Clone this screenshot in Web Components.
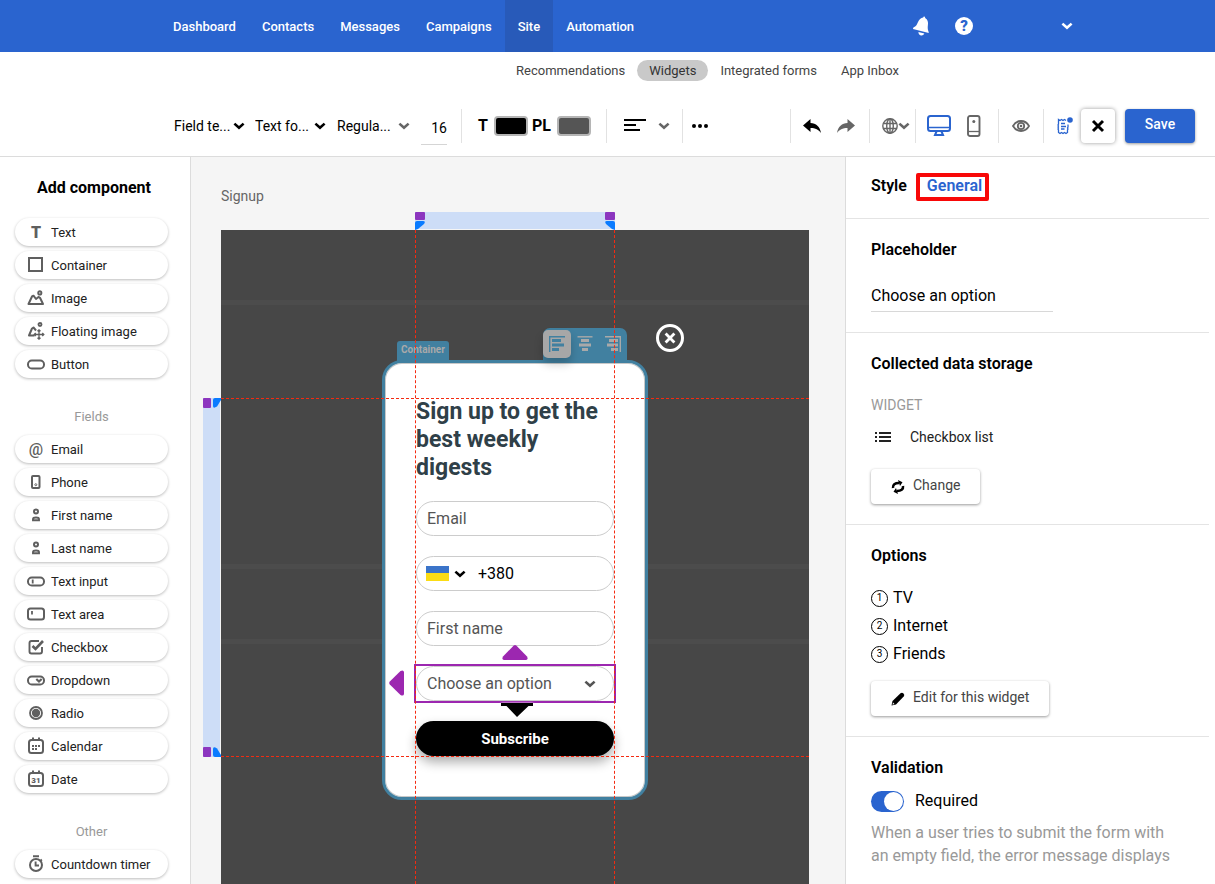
<!DOCTYPE html>
<html lang="en">
<head>
<meta charset="utf-8">
<title>Widget editor – Signup</title>
<style>
  html, body { margin: 0; height: 100%; }
  body { font-family: Roboto, "Liberation Sans", sans-serif; color: #000; background: #fff; overflow: hidden; }
</style>
</head>
<body>
<widget-editor></widget-editor>

<script>
const BASE = `
  *, *::before, *::after { box-sizing: border-box; }
  button, input, select { font: inherit; color: inherit; margin: 0; padding: 0; border: 0; background: none; }
  button { cursor: pointer; }
  a { color: inherit; text-decoration: none; }
  h2, h3, p, ul, ol { margin: 0; padding: 0; font-weight: inherit; list-style: none; }
`;

function define(name, html, setup) {
  const template = document.createElement('template');
  template.innerHTML = html;
  customElements.define(name, class extends HTMLElement {
    connectedCallback() {
      if (this.shadowRoot) return;
      const root = this.attachShadow({ mode: 'open' });
      root.append(template.content.cloneNode(true));
      const style = document.createElement('style');
      style.textContent = BASE;
      root.prepend(style);
      if (setup) setup(this, root);
    }
  });
}

/* name: [width, height, markup] */
const S = 'fill="none" stroke="currentColor"';
const ICONS = {
  chevron: [12, 8, `<path d="M1.400 1.600 6 5.800 10.600 1.600" ${S} stroke-width="2.600"/>`],
  bell: [20, 22, `<path fill="currentColor" d="M13.2 1.4c.9.2 1 .8.9 1.5 2.600 1.500 3.300 4 2.800 7.200-.3 2.200-.3 4.400.6 6.500l.3 1.500L2 13.900c.1-.9.400-1.300 1.300-1.800 1.800-1 2.700-2.700 3.600-4.900C8 4.500 9.800 2.900 12.200 2.500c.1-.8.400-1.200 1-1.100z"/><path fill="currentColor" d="M7.400 17l6 1.600c-.8 1.600-2.100 2.200-3.500 1.900-1.500-.4-2.500-1.700-2.500-3.500z"/>`],
  lines: [22, 14, `<path d="M0 1h22M0 6h12M0 11h16" ${S} stroke-width="2"/>`],
  dots: [16, 4, `<circle cx="2" cy="2" r="2"/><circle cx="8" cy="2" r="2"/><circle cx="14" cy="2" r="2"/>`],
  undo: [18, 16, `<path fill="currentColor" d="M0 7.500 7.500 1v4C13 5.200 17 8.500 18 15c-2.500-3.500-5.500-5-10.500-5v4z"/>`],
  redo: [18, 16, `<path fill="currentColor" d="M18 7.500 10.500 1v4C5 5.200 1 8.500 0 15c2.500-3.500 5.500-5 10.500-5v4z"/>`],
  globe: [16, 16, `<g ${S} stroke-width="1.400"><circle cx="8" cy="8" r="7.200"/><ellipse cx="8" cy="8" rx="3.300" ry="7.200"/><path d="M8 .8v14.400M1.200 5.500h13.600M1.200 10.500h13.600"/></g>`],
  monitor: [24, 22, `<g ${S} stroke-width="2"><rect x="1" y="1" width="22" height="15" rx="2.500"/><path d="M1 12.500h22" stroke-width="1.500"/><path d="M9.500 16.500 8 20h8l-1.500-3.500" /></g>`],
  mobile: [14, 22, `<g ${S} stroke-width="1.900"><rect x="1" y="1" width="11.500" height="20" rx="2"/><path d="M1 16.500h12" stroke-width="1.300"/></g><circle cx="6.800" cy="6.500" r="1.500" fill="currentColor"/>`],
  eye: [18, 12, `<path d="M1 6C3 2.500 5.800 1 9 1s6 1.500 8 5c-2 3.500-4.800 5-8 5S3 9.500 1 6z" ${S} stroke-width="1.800"/><circle cx="9" cy="6" r="3.200" ${S} stroke-width="1.800"/><circle cx="9" cy="6" r="1.300" fill="currentColor"/>`],
  notes: [16, 18, `<g ${S} stroke-width="1.300"><path d="M9 3.500 7.500 2.500 6 3.500 4.500 2.500 3 3.500 1.500 2.500V7L1 8l.5 1-.5 1 .5 1-.5 1 .5 1v2.500l1.500 1 1.500-1 1.500 1 1.500-1 1.500 1 1.500-1V13l.5-1-.5-1 .5-1V7.500"/><path d="M4 6.500h4M4 9.500h5M4 12h3.500"/></g><circle cx="13" cy="3" r="2.800" fill="currentColor"/>`],
  close: [12, 12, `<path d="M1 1l10 10M11 1 1 11" ${S} stroke-width="2.900"/>`],
  closeSmall: [10, 10, `<path d="M.6.600l8.800 8.800M9.400.600.600 9.400" ${S} stroke-width="2.800"/>`],
  box: [16, 16, `<rect x="1" y="1" width="13" height="13" ${S} stroke-width="2"/>`],
  image: [18, 16, `<path d="M1.500 14 5 6.500l1.500-.8L9 9l2.500-2 1.500.8 3 6.200z" ${S} stroke-width="2" stroke-linejoin="round"/><circle cx="12.800" cy="2.900" r="1.600" ${S} stroke-width="1.900"/>`],
  floating: [18, 18, `<path d="M7.500 13.500H2L5 6.500l1.500-1L9 8.500" ${S} stroke-width="2" stroke-linejoin="round"/><circle cx="13" cy="2.500" r="1.500" ${S} stroke-width="1.900"/><path d="M12 8v9M7.500 12.500h9M10.500 9.300 12 7.800l1.500 1.500M10.500 15.700 12 17.200l1.500-1.500M8.700 11l-1.500 1.500L8.700 14M15.300 11l1.500 1.500-1.500 1.500" ${S} stroke-width="1.300"/>`],
  pill: [18, 11, `<rect x="1" y="1.500" width="16" height="8" rx="3.800" ${S} stroke-width="2"/>`],
  phone: [10, 14, `<rect x="1" y="1" width="7.500" height="12" rx="1" ${S} stroke-width="2"/><circle cx="4.800" cy="9.700" r="1" ${S} stroke-width=".9"/>`],
  person: [8, 14, `<circle cx="4" cy="3.400" r="2" ${S} stroke-width="2"/><path d="M1 12.200v-1.200c0-2 6-2 6 0v1.200z" ${S} stroke-width="1.900"/>`],
  input: [18, 11, `<rect x="1" y="1.500" width="16" height="8" rx="3.800" ${S} stroke-width="2"/><path d="M5.700 3.500v4" ${S} stroke-width="1.800"/>`],
  area: [18, 14, `<rect x="1" y="1.500" width="16" height="11" rx="2.500" ${S} stroke-width="2"/><path d="M5 4v3.500" ${S} stroke-width="1.800"/>`],
  check: [16, 16, `<path d="M11 2H3.500Q1.500 2 1.500 4v8.500q0 2 2 2H12q2 0 2-2V8" ${S} stroke-width="1.900"/><path d="M4.500 7 7.500 10 15 2" ${S} stroke-width="2.600"/>`],
  dropdown: [18, 11, `<rect x="1" y="1.500" width="16" height="8" rx="3.800" ${S} stroke-width="2"/><path d="M9.300 4 12 6.500 14.700 4" ${S} stroke-width="2.200"/>`],
  radio: [14, 14, `<circle cx="7" cy="7" r="6" ${S} stroke-width="1.800"/><circle cx="7" cy="7" r="4.200" fill="currentColor"/>`],
  calendar: [16, 18, `<rect x="1" y="3" width="14" height="13" rx="2.500" ${S} stroke-width="2"/><path d="M5 .5V4M11 .5V4" ${S} stroke-width="2"/><path d="M4 8h2v2H4zM7 8h2v2H7zM10 8h2v2h-2zM4 11h2v2H4zM7 11h2v2H7z" fill="currentColor"/>`],
  date: [16, 18, `<rect x="1" y="3" width="14" height="13" rx="2.500" ${S} stroke-width="2"/><path d="M5 .5V4M11 .5V4" ${S} stroke-width="2"/><text x="8" y="13" text-anchor="middle" font-size="8" font-weight="900" fill="currentColor">31</text>`],
  timer: [16, 18, `<circle cx="8" cy="10" r="6" ${S} stroke-width="2"/><path d="M5 1.300h6M7.600 6.500v4h3.400M12.500 4.500l1.300 1.300" ${S} stroke-width="1.900"/>`],
  list: [16, 10, `<path d="M0 1h2M0 5h2M0 9h2M4 1h12M4 5h12M4 9h12" ${S} stroke-width="2"/>`],
  sync: [14, 14, `<path d="M2 8C1.500 4.500 4 3 8 3M12 6c.5 3.500-2 5-6 5" ${S} stroke-width="2.600"/><path fill="currentColor" d="M7 0 11.500 2.200 9 6zM7 14 2.500 11.800 5 8z"/>`],
  pencil: [14, 14, `<path fill="currentColor" d="M.5 13.500 1.500 9 9.500 1.200q1.500-1.200 3 .2t.2 3L5 12.500z"/><path d="M2 10.500 3.500 12l-2 .8z" fill="#fff"/>`],
  alignLeft: [16, 16, `<path d="M.7 0v16M.7.8H16" ${S} stroke-width="1.400"/><path fill="currentColor" d="M3 3h9v3H3zM3 7.500h12v3H3zM3 12h7v3H3z"/>`],
  alignCenter: [16, 16, `<path d="M.5.8h15" ${S} stroke-width="1.400"/><path fill="currentColor" d="M4 3h8v3H4zM2 7.500h12v3H2zM5 12h6v3H5z"/>`],
  alignRight: [16, 16, `<path d="M15.300 0v16M0 .8h16" ${S} stroke-width="1.400"/><path fill="currentColor" d="M4 3h9v3H4zM2 7.500h11v3H2zM6 12h7v3H6z"/>`],
  arrowUp: [26, 16, `<path fill="currentColor" d="M11.500.8Q13-.6 14.500.8L25 11.500q1.500 3-1 3.500H2q-2.500-.5-1-3.500z"/>`],
  arrowLeft: [16, 26, `<path fill="currentColor" d="M.8 11.500Q-.6 13 .8 14.500L11.500 25q3 1.500 3.500-1V2q-.5-2.500-3.500-1z"/>`],
  drop: [34, 16, `<path fill="currentColor" d="M1 1h32v3h-4.500L17 15 6.500 4H1z"/>`],
  handle: [10, 9, `<path fill="currentColor" d="M0 2q0-2 2-2h6q3 0 1 3L3 8 0 9z"/>`],
  handleSide: [8, 10, `<path fill="currentColor" d="M2 0h6v2L4 8.500Q0 11 0 8V2q0-2 2-2z"/>`]
};

define('ui-icon', `
  <style>:host { display: inline-flex; flex: none; } svg { display: block; overflow: visible; }</style>`,
  (host, root) => {
    const [w, h, body] = ICONS[host.getAttribute('name')];
    const holder = document.createElement('template');
    holder.innerHTML = `<svg width="${w}" height="${h}" viewBox="0 0 ${w} ${h}" aria-hidden="true">${body}</svg>`;
    root.append(holder.content);
  });

/* Drop-down with its chevron laid at the end of the box. */
define('ui-select', `
  <style>
    :host { display: inline-grid; align-items: center; color: #000; --chevron: currentColor; }
    select { appearance: none; grid-area: 1 / 1; width: 100%; height: 100%; outline: 0; border-radius: 0; opacity: 1; }
    ui-icon { grid-area: 1 / 1; justify-self: end; pointer-events: none; color: var(--chevron); z-index: 1; }
  </style>
  <select></select><ui-icon name="chevron"></ui-icon>`,
  (host, root) => {
    const select = root.querySelector('select');
    select.setAttribute('aria-label', host.getAttribute('label'));
    select.add(new Option(host.getAttribute('value')));
  });

define('top-nav', `
  <style>
    :host { display: flex; height: 52px; padding: 0 142px 0 162px; background: #2a64cf; color: #fff; flex: none; justify-content: space-between; }
    nav { display: flex; font-size: 13px; font-weight: 500; padding-bottom: 0; }
    nav a { display: flex; align-items: center; padding: 0 13px; }
    nav a:first-child { padding-left: 11px; }
    nav a[aria-current] { background: #285ab9; }
    .tools { display: flex; align-items: center; }
    .tools button { display: flex; }
    .tools .help { width: 18px; height: 18px; margin: 0 88px 0 24px; border-radius: 50%; background: #fff; color: #2a64cf; font-size: 15px; font-weight: 900; justify-content: center; align-items: center; }
  </style>
  <nav>
    <a href="#">Dashboard</a><a href="#">Contacts</a><a href="#">Messages</a><a href="#">Campaigns</a><a href="#" aria-current="page">Site</a><a href="#">Automation</a>
  </nav>
  <div class="tools">
    <button aria-label="Notifications"><ui-icon name="bell"></ui-icon></button>
    <button class="help" aria-label="Help">?</button>
    <button aria-label="Account"><ui-icon name="chevron"></ui-icon></button>
  </div>`);

define('sub-nav', `
  <style>
    :host { display: flex; justify-content: flex-end; padding: 8px 304px 8px 0; font-size: 13px; color: #444; flex: none; }
    a { padding: 0 12px; line-height: 21px; border-radius: 11px; }
    a[aria-current] { background: #c9c9c9; color: #333; }
  </style>
  <a href="#">Recommendations</a><a href="#" aria-current="page">Widgets</a><a href="#">Integrated forms</a><a href="#">App Inbox</a>`);

define('tool-bar', `
  <style>
    :host { display: flex; align-items: center; height: 68px; padding: 6px 20px 0 174px; border-bottom: 1px solid #dcdcdc; font-size: 14px; flex: none; }
    button { display: flex; align-items: center; justify-content: center; flex: none; }
    ui-select { width: 71px; height: 24px; margin-right: 10px; }
    ui-select[value^="Text"] { margin-right: 11px; }
    ui-select[value^="Regula"] { width: 73px; margin-right: 11px; --chevron: #666; }
    .size { width: 26px; height: 38px; padding-top: 6px; border-bottom: 1px solid #d5d5d5; text-align: right; outline: 0; }
    hr { width: 1px; height: 34px; margin: 0; border: 0; background: #e2e2e2; flex: none; }
    .size + hr { margin: 0 16px 0 14px; }
    .colour { display: flex; align-items: center; gap: 6px; font-size: 16px; font-weight: 700; margin-right: 4px; }
    .swatch { width: 34px; height: 20px; border: 2px solid #b5b5b5; border-radius: 4px; background: #000; }
    .swatch.grey { background: #555; }
    .colour + hr { margin-left: 11px; }
    .align { gap: 12px; margin: 0 12px 0 17px; }
    .align ui-icon + ui-icon { color: #666; }
    .more { margin-left: 9px; }
    .spacer { flex: 1; }
    .group { display: flex; align-items: center; justify-content: center; flex: none; color: #666; }
    .history { width: 78px; gap: 16px; padding-right: 2px; }
    .history button:first-child { color: #000; }
    .language { width: 45px; padding-left: 6px; }
    .device { width: 82px; gap: 16px; padding-right: 6px; }
    .preview { width: 44px; }
    .review { width: 37px; padding-left: 4px; }
    .close { width: 34px; height: 34px; border-radius: 4px; box-shadow: 0 0 4px #0006; color: #000; margin-right: 10px; }
    .save { width: 70px; height: 34px; border-radius: 4px; background: #2a64cf; color: #fff; font-weight: 500; box-shadow: 0 1px 3px #0006; padding-bottom: 3px; }
    .blue { color: #2a64cf; }
  </style>
  <ui-select label="Field" value="Field te..."></ui-select>
  <ui-select label="Font" value="Text fo..."></ui-select>
  <ui-select label="Weight" value="Regula..."></ui-select>
  <input class="size" value="16" aria-label="Font size">
  <hr>
  <span class="colour">T <button class="swatch" aria-label="Text colour"></button></span>
  <span class="colour">PL <button class="swatch grey" aria-label="Placeholder colour"></button></span>
  <hr>
  <button class="align" aria-label="Text alignment"><ui-icon name="lines"></ui-icon><ui-icon name="chevron"></ui-icon></button>
  <hr>
  <button class="more" aria-label="More"><ui-icon name="dots"></ui-icon></button>
  <span class="spacer"></span>
  <hr>
  <div class="group history">
    <button aria-label="Undo"><ui-icon name="undo"></ui-icon></button>
    <button aria-label="Redo"><ui-icon name="redo"></ui-icon></button>
  </div>
  <hr>
  <div class="group language"><button aria-label="Language"><ui-icon name="globe"></ui-icon><ui-icon name="chevron"></ui-icon></button></div>
  <hr>
  <div class="group device">
    <button class="blue" aria-label="Desktop"><ui-icon name="monitor"></ui-icon></button>
    <button aria-label="Mobile"><ui-icon name="mobile"></ui-icon></button>
  </div>
  <hr>
  <div class="group preview"><button aria-label="Preview"><ui-icon name="eye"></ui-icon></button></div>
  <hr>
  <div class="group review"><button class="blue" aria-label="Notes"><ui-icon name="notes"></ui-icon></button></div>
  <button class="close" aria-label="Close"><ui-icon name="close"></ui-icon></button>
  <button class="save">Save</button>`);

define('palette-item', `
  <style>
    :host { display: block; }
    button { display: grid; grid-template-columns: 42px 1fr; align-items: center; width: 100%; height: 28px; padding-right: 8px; border-radius: 14px; font-size: 13px; color: #222; text-align: left; background: #fff; box-shadow: 0 1px 3px #0004; }
    .icon { display: flex; justify-content: center; color: #5f5f5f; font-size: 16px; font-weight: 900; }
    .icon.light { font-weight: 500; }
    button > span + span { margin-left: -6px; }
  </style>
  <button><span class="icon"></span><span><slot></slot></span></button>`,
  (host, root) => {
    const slot = root.querySelector('.icon');
    const glyph = host.getAttribute('glyph');
    if (glyph) { slot.textContent = glyph; slot.classList.toggle('light', glyph === '@'); }
    else slot.innerHTML = `<ui-icon name="${host.getAttribute('icon')}"></ui-icon>`;
  });

define('component-palette', `
  <style>
    :host { display: block; border-right: 1px solid #dcdcdc; padding: 20px 22px 0 15px; overflow: hidden; }
    h2 { font-size: 16px; font-weight: 700; line-height: 22px; text-align: center; margin-bottom: 19px; padding-left: 5px; }
    .group { display: grid; gap: 5px; }
    h3 { font-size: 13px; line-height: 20px; color: #999; text-align: center; margin: 29px 0 8px; }
  </style>
  <h2>Add component</h2>
  <div class="group">
    <palette-item glyph="T">Text</palette-item>
    <palette-item icon="box">Container</palette-item>
    <palette-item icon="image">Image</palette-item>
    <palette-item icon="floating">Floating image</palette-item>
    <palette-item icon="pill">Button</palette-item>
  </div>
  <h3>Fields</h3>
  <div class="group">
    <palette-item glyph="@">Email</palette-item>
    <palette-item icon="phone">Phone</palette-item>
    <palette-item icon="person">First name</palette-item>
    <palette-item icon="person">Last name</palette-item>
    <palette-item icon="input">Text input</palette-item>
    <palette-item icon="area">Text area</palette-item>
    <palette-item icon="check">Checkbox</palette-item>
    <palette-item icon="dropdown">Dropdown</palette-item>
    <palette-item icon="radio">Radio</palette-item>
    <palette-item icon="calendar">Calendar</palette-item>
    <palette-item icon="date">Date</palette-item>
  </div>
  <h3>Other</h3>
  <div class="group">
    <palette-item icon="timer">Countdown timer</palette-item>
  </div>`);

define('signup-card', `
  <style>
    :host { display: block; box-sizing: border-box; position: relative; width: 266px; padding: 35px 31px 41px; border: 3px solid #4180a0; border-radius: 20px; background: #fff; box-shadow: inset 0 0 0 1px #c8c8c8; }
    h2 { font-size: 23px; font-weight: 700; line-height: 28px; color: #2f4048; }
    form { display: grid; grid-template-columns: minmax(0, 1fr); gap: 20px; margin-top: 19px; font-size: 16px; }
    .field { display: flex; align-items: center; position: relative; width: 100%; height: 35px; padding: 0 10px; border: 1px solid #ccc; border-radius: 18px; outline: 0; }
    input::placeholder { color: #555; opacity: 1; }
    .flag { width: 23px; height: 15px; margin: 0 5px 0 -1px; background: linear-gradient(#3b74c9 50%, #fbdc14 50%); }
    .phone { color: #000; }
    .phone input { flex: 1; min-width: 0; margin-left: 12px; outline: 0; }
    .field.picked { padding: 0; }
    .picked::after { content: ""; position: absolute; inset: -3px; border: 2px solid #9c27b0; pointer-events: none; }
    .picked ui-select { flex: 1; height: 100%; margin: 0 17px 0 10px; color: #555; }
    .submit { display: block; height: 35px; border-radius: 18px; background: #000; color: #fff; font-size: 15px; font-weight: 700; box-shadow: 0 6px 12px #0005; }
    .tag, .aligns, .shut, .mark { position: absolute; }
    .tag { left: 12px; top: -22px; height: 20px; padding: 0 4px; border-radius: 3px 3px 0 0; background: #4180a0; color: #a9a9a9; font-size: 10px; font-weight: 700; line-height: 17px; }
    .aligns { display: flex; right: 18px; top: -35px; height: 33px; padding-top: 2px; border-radius: 7px 7px 0 0; background: #4180a0; color: #a9a9a9; }
    .aligns button { display: flex; align-items: center; justify-content: center; width: 28px; height: 28px; }
    .aligns [aria-pressed] { border-radius: 5px; background: #a7a7a7; color: #4180a0; box-shadow: 0 6px 10px #0003; }
    .shut { display: flex; align-items: center; justify-content: center; left: 271px; top: -39px; width: 28px; height: 28px; border: 3px solid #fff; border-radius: 50%; color: #fff; }
    .mark { color: #9c27b0; }
    .up { left: 117px; top: 282px; }
    .left { left: 4px; top: 307px; }
    .down { left: 115px; top: 339px; color: #000; filter: drop-shadow(0 0 1px #fff); }
  </style>
  <span class="tag">Container</span>
  <div class="aligns">
    <button aria-label="Align left" aria-pressed="true"><ui-icon name="alignLeft"></ui-icon></button>
    <button aria-label="Align centre"><ui-icon name="alignCenter"></ui-icon></button>
    <button aria-label="Align right"><ui-icon name="alignRight"></ui-icon></button>
  </div>
  <button class="shut" aria-label="Close"><ui-icon name="closeSmall"></ui-icon></button>
  <h2>Sign up to get the best weekly digests</h2>
  <form>
    <input class="field" placeholder="Email" aria-label="Email">
    <div class="field phone"><span class="flag"></span><ui-icon name="chevron"></ui-icon><input value="+380" aria-label="Phone"></div>
    <input class="field" placeholder="First name" aria-label="First name">
    <div class="field picked"><ui-select label="Choose an option" value="Choose an option"></ui-select></div>
    <button class="submit" type="button">Subscribe</button>
  </form>
  <span class="mark up"><ui-icon name="arrowUp"></ui-icon></span>
  <span class="mark left"><ui-icon name="arrowLeft"></ui-icon></span>
  <span class="mark down"><ui-icon name="drop"></ui-icon></span>`);

define('widget-canvas', `
  <style>
    :host { display: flex; flex-direction: column; padding: 29px 36px 0 30px; background: #f5f5f5; overflow: hidden; font-size: 14px; color: #666; }
    .name { line-height: 20px; margin-bottom: 24px; }
    .stage { position: relative; flex: 1; padding-top: 130px; background: linear-gradient(#4c4c4c, #4c4c4c) 0 70px / 100% 5px no-repeat, linear-gradient(#4c4c4c, #4c4c4c) 0 334px / 100% 5px no-repeat, linear-gradient(#4c4c4c, #4c4c4c) 0 409px / 100% 5px no-repeat, #474747; }
    signup-card { margin: 0 auto; }
    .columns, .rows, .ruler { position: absolute; pointer-events: none; }
    .columns { inset: 0; width: 200px; margin: 0 auto; border: dashed #f52a10; border-width: 0 1px; }
    .rows { left: 0; right: 0; top: 168px; height: 359px; border: dashed #f52a10; border-width: 1px 0; }
    .ruler { display: flex; justify-content: space-between; background: #cdddf7; }
    .ruler.top { left: 0; right: 0; top: -18px; width: 200px; height: 17px; margin: 0 auto; }
    .ruler.side { left: -18px; top: 168px; width: 17px; height: 359px; flex-direction: column; }
    .stop { display: flex; flex-direction: column; gap: 1px; color: #0a7bff; }
    .stop::before { content: ""; flex: none; width: 10px; height: 8px; border-radius: 1px; background: #8c36bf; }
    .top .stop:last-child { transform: scaleX(-1); }
    .side .stop { flex-direction: row; gap: 2px; }
    .side .stop::before { width: 8px; height: 10px; }
    .side .stop:last-child { transform: scaleY(-1); }
  </style>
  <p class="name">Signup</p>
  <div class="stage">
    <signup-card></signup-card>
    <div class="columns"></div>
    <div class="rows"></div>
    <div class="ruler top"><span class="stop"><ui-icon name="handle"></ui-icon></span><span class="stop"><ui-icon name="handle"></ui-icon></span></div>
    <div class="ruler side"><span class="stop"><ui-icon name="handleSide"></ui-icon></span><span class="stop"><ui-icon name="handleSide"></ui-icon></span></div>
  </div>`);

define('settings-section', `
  <style>
    :host { display: block; padding: 20px 25px; border-bottom: 1px solid #e4e4e4; }
    :host([last]) { border: 0; }
    h2 { font-size: 16px; line-height: 22px; font-weight: 600; }
  </style>
  <h2></h2><slot></slot>`,
  (host, root) => { root.querySelector('h2').textContent = host.getAttribute('heading'); });

define('raised-button', `
  <style>
    :host { display: block; }
    button { display: flex; align-items: center; gap: 8px; height: 35px; padding: 0 20px 3px; border-radius: 4px; font-size: 14px; color: #444; background: #fff; box-shadow: 0 1px 3px #0006; }
    ui-icon { color: #000; padding-top: 3px; }
  </style>
  <button><slot></slot></button>`,
  (host, root) => {
    const icon = document.createElement('ui-icon');
    icon.setAttribute('name', host.getAttribute('icon'));
    root.querySelector('button').prepend(icon);
  });

define('toggle-switch', `
  <style>
    :host { display: block; }
    label { display: flex; align-items: center; gap: 11px; font-size: 16px; line-height: 22px; }
    label input { appearance: none; width: 33px; height: 21px; border-radius: 11px; background: #2a64cf; display: flex; justify-content: flex-end; padding: 1px; }
    input::before { content: ""; width: 19px; height: 19px; border-radius: 50%; background: #fff; }
  </style>
  <label><input type="checkbox" role="switch" checked><slot></slot></label>`);

define('settings-panel', `
  <style>
    :host { display: block; border-left: 1px solid #dcdcdc; padding-right: 6px; overflow: hidden; }
    .tabs { display: flex; align-items: center; gap: 9px; padding: 16px 25px 17px; border-bottom: 1px solid #e4e4e4; font-size: 16px; font-weight: 600; }
    .tabs a { height: 28px; line-height: 26px; }
    .tabs a[aria-current] { color: #2a64cf; border: 4px solid #f80808; border-radius: 2px; padding: 0 3px 0 7px; line-height: 18px; }
    .text { display: block; width: 182px; height: 30px; margin-top: 21px; padding-bottom: 2px; border-bottom: 1px solid #d8d8d8; font-size: 16px; outline: 0; }
    .kind { margin-top: 20px; font-size: 14px; line-height: 20px; color: #999; }
    .source { display: flex; align-items: center; gap: 19px; margin: 12px 0 22px; padding-left: 4px; font-size: 14px; line-height: 20px; color: #222; }
    ol.options { margin: 17px 0 13px; font-size: 16px; }
    li { display: flex; align-items: center; gap: 5px; line-height: 28px; }
    li i { display: flex; align-items: center; justify-content: center; width: 17px; height: 17px; border: 1px solid #000; border-radius: 50%; font-style: normal; font-size: 10px; line-height: 16px; }
    toggle-switch { margin-top: 11px; }
    .note { margin-top: 9px; font-size: 16px; line-height: 23px; color: #999; width: 305px; }
  </style>
  <nav class="tabs"><a href="#">Style</a><a href="#" aria-current="page">General</a></nav>
  <settings-section heading="Placeholder">
    <input class="text" value="Choose an option" aria-label="Placeholder">
  </settings-section>
  <settings-section heading="Collected data storage">
    <p class="kind">WIDGET</p>
    <p class="source"><ui-icon name="list"></ui-icon>Checkbox list</p>
    <raised-button icon="sync">Change</raised-button>
  </settings-section>
  <settings-section heading="Options">
    <ol class="options"><li><i>1</i>TV</li><li><i>2</i>Internet</li><li><i>3</i>Friends</li></ol>
    <raised-button icon="pencil">Edit for this widget</raised-button>
  </settings-section>
  <settings-section heading="Validation" last>
    <toggle-switch>Required</toggle-switch>
    <p class="note">When a user tries to submit the form with an empty field, the error message displays</p>
  </settings-section>`);

define('widget-editor', `
  <style>
    :host { display: flex; flex-direction: column; height: 100vh; }
    main { flex: 1; min-height: 0; display: grid; grid-template-columns: 191px minmax(0, 1fr) 370px; grid-template-rows: minmax(0, 1fr); }
  </style>
  <top-nav></top-nav>
  <sub-nav></sub-nav>
  <tool-bar></tool-bar>
  <main>
    <component-palette></component-palette>
    <widget-canvas></widget-canvas>
    <settings-panel></settings-panel>
  </main>`);
</script>
</body>
</html>
